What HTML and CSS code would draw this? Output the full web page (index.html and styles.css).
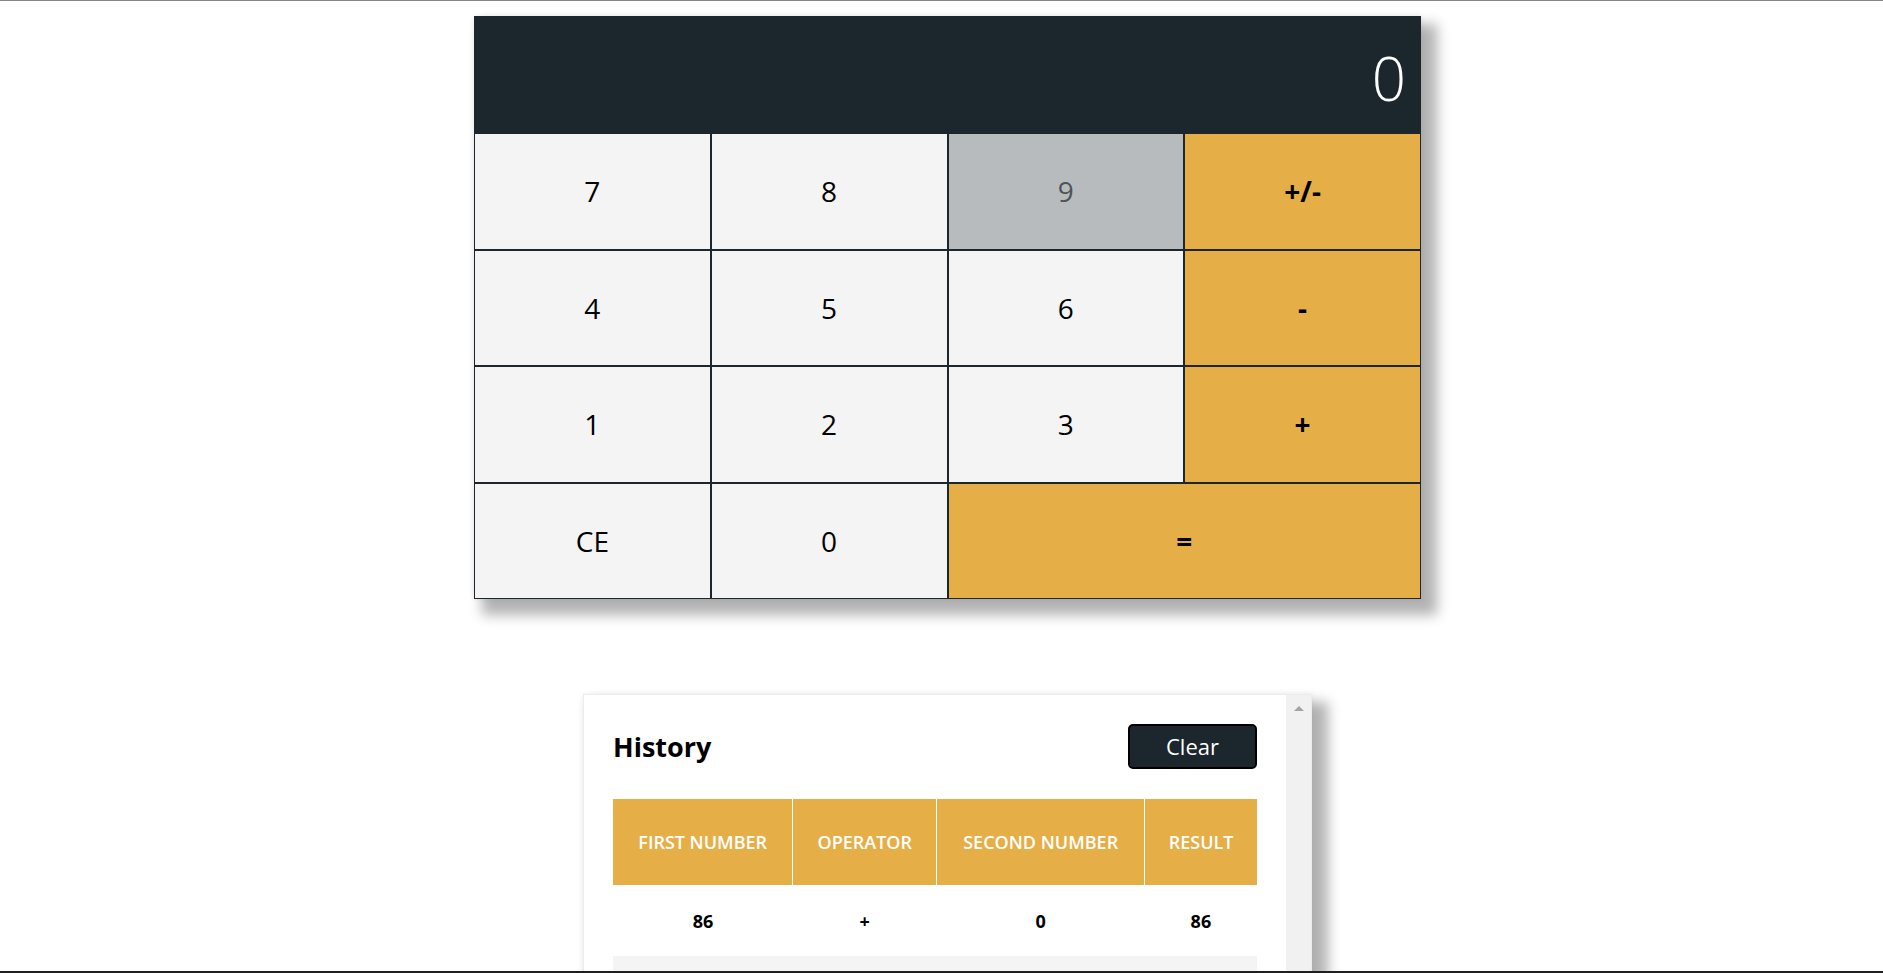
FILE: index.html
```html
<!DOCTYPE html>
<html lang="en">
<head>
<meta charset="utf-8">
<title>Calculator</title>
<link rel="stylesheet" href="styles.css">
</head>
<body>
<div class="frame-bottom"></div>
<main class="page">
  <section class="calculator">
    <div class="display">0</div>
    <div class="keys">
      <button class="key">7</button>
      <button class="key">8</button>
      <button class="key key-hover">9</button>
      <button class="key key-op">+/-</button>
      <button class="key">4</button>
      <button class="key">5</button>
      <button class="key">6</button>
      <button class="key key-op">-</button>
      <button class="key">1</button>
      <button class="key">2</button>
      <button class="key">3</button>
      <button class="key key-op">+</button>
      <button class="key">CE</button>
      <button class="key">0</button>
      <button class="key key-op key-wide">=</button>
    </div>
  </section>

  <section class="history">
    <div class="history-content">
      <div class="history-head">
        <h2 class="history-title">History</h2>
        <button class="clear-btn">Clear</button>
      </div>
      <table class="history-table">
        <thead>
          <tr>
            <th class="col-first">First Number</th>
            <th class="col-op">Operator</th>
            <th class="col-second">Second Number</th>
            <th class="col-result">Result</th>
          </tr>
        </thead>
        <tbody>
          <tr><td>86</td><td>+</td><td>0</td><td>86</td></tr>
          <tr><td></td><td></td><td></td><td></td></tr>
        </tbody>
      </table>
    </div>
    <div class="scrollbar">
      <span class="scroll-arrow"></span>
    </div>
  </section>
</main>
</body>
</html>
```

FILE: styles.css
```css
html, body {
  margin: 0;
  padding: 0;
  height: 100%;
}

body {
  background: #ffffff;
  font-family: "Open Sans", "Noto Sans", "Liberation Sans", sans-serif;
  color: #000;
  border-top: 1px solid #858585;
  box-sizing: border-box;
  overflow: hidden;
}

.frame-bottom {
  position: fixed;
  left: 0;
  right: 0;
  bottom: 0;
  height: 2px;
  background: #1f1f1f;
  z-index: 10;
}

.page {
  display: flex;
  flex-direction: column;
  align-items: center;
  padding-left: 12px;
  padding-top: 15px;
}

/* Calculator */
.calculator {
  width: 947px;
  box-shadow: 0 0 6px rgba(0, 0, 0, 0.08), 12px 12px 12px 4px #b3b3b3;
}

.display {
  height: 117px;
  background: #1c262d;
  color: #ffffff;
  font-size: 60px;
  font-weight: 300;
  display: flex;
  align-items: center;
  justify-content: flex-end;
  padding: 6px 15px 0 0;
  box-sizing: border-box;
  line-height: 1;
}

.keys {
  display: grid;
  grid-template-columns: repeat(4, 1fr);
  grid-auto-rows: 116.5px;
}

.key {
  margin: 0;
  border: 1px solid #1c262d;
  background: #f4f4f4;
  font-family: inherit;
  font-size: 28px;
  font-weight: 400;
  color: #000;
  padding: 0;
  cursor: pointer;
}

.key-hover {
  background: #b8bbbe;
  color: #4f5358;
}

.key-op {
  background: #e6ae46;
  font-weight: 700;
}

.key-wide {
  grid-column: span 2;
}

/* History */
.history {
  margin-top: 95px;
  width: 729px;
  height: 420px;
  display: flex;
  background: #ffffff;
  border: 1px solid #ececec;
  box-sizing: border-box;
  box-shadow: 0 0 6px rgba(0, 0, 0, 0.06), 12px 12px 12px 4px #b3b3b3;
}

.history-content {
  flex: 1;
  padding: 29px 30px 0 29px;
  overflow: hidden;
}

.history-head {
  display: flex;
  justify-content: space-between;
  align-items: center;
}

.history-title {
  margin: 0;
  font-size: 27px;
  font-weight: 700;
}

.clear-btn {
  width: 129px;
  height: 45px;
  background: #1c262d;
  color: #ffffff;
  border: 2px solid #000;
  border-radius: 5px;
  font-family: inherit;
  font-size: 22px;
  padding: 0 0 2px;
  margin-right: -1px;
}

.history-table {
  margin-top: 30px;
  width: 644px;
  border-collapse: collapse;
  text-align: center;
}

.history-table th {
  background: #e6ae46;
  color: #ffffff;
  font-size: 18px;
  font-weight: 600;
  text-transform: uppercase;
  height: 86px;
  padding: 0;
  border-left: 1px solid #ffffff;
}

.history-table th:first-child {
  border-left: none;
}

.col-first { width: 180px; }
.col-op { width: 143px; }
.col-second { width: 208px; }
.col-result { width: 112px; }

.history-table td {
  height: 71px;
  padding: 0;
  font-size: 18px;
  font-weight: 700;
}

.history-table tbody tr:nth-child(even) td {
  background: #f4f4f4;
}

.scrollbar {
  width: 25px;
  background: #f1f1f1;
  display: flex;
  justify-content: center;
  padding-top: 11px;
  box-sizing: border-box;
}

.scroll-arrow {
  width: 0;
  height: 0;
  border-left: 5px solid transparent;
  border-right: 5px solid transparent;
  border-bottom: 5px solid #a3a3a3;
}
```
